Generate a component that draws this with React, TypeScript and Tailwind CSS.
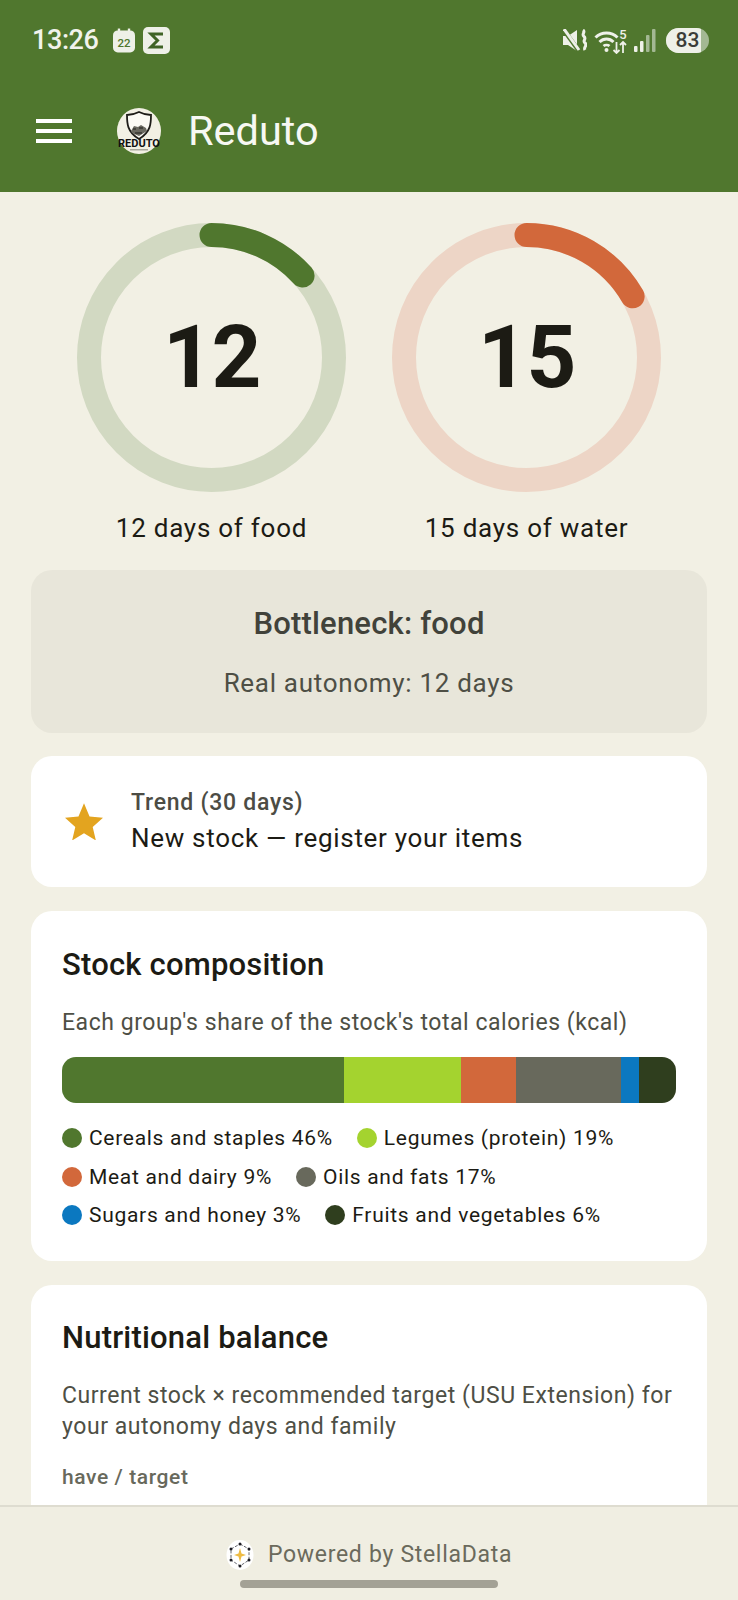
import React from 'react';

const MAX_DAYS = 90;

const segments = [
    { label: 'Cereals and staples', pct: 46, color: 'bg-[#50772e]' },
    { label: 'Legumes (protein)', pct: 19, color: 'bg-[#a4d32f]' },
    { label: 'Meat and dairy', pct: 9, color: 'bg-[#d2683b]' },
    { label: 'Oils and fats', pct: 17, color: 'bg-[#68695c]' },
    { label: 'Sugars and honey', pct: 3, color: 'bg-[#0b78c0]' },
    { label: 'Fruits and vegetables', pct: 6, color: 'bg-[#2f3e1e]' },
];

const StatusBar = () => (
    <div className="flex h-[78px] items-center justify-between pl-[32px] pr-[29px] pt-[2px]">
        <div className="flex items-center">
            <span className="text-[27px] font-medium leading-none tracking-[-0.4px] text-[#f1f3ec]">13:26</span>
            <svg width="22" height="25" viewBox="0 0 23 25" className="ml-[14px]">
                <rect x="0" y="2" width="23" height="23" rx="5" fill="#eef0e8" />
                <rect x="5" y="0" width="2.5" height="5" fill="#eef0e8" />
                <rect x="15.5" y="0" width="2.5" height="5" fill="#eef0e8" />
                <text x="11.5" y="19" textAnchor="middle" fontSize="12" fontWeight="500" fill="#50772e" fontFamily="Roboto">22</text>
            </svg>
            <svg width="27" height="27" viewBox="0 0 27 27" className="ml-[8px]">
                <rect width="27" height="27" rx="5" fill="#eef0e8" />
                <path d="M20 7H8l6.500 6.500L8 20h12" fill="none" stroke="#3f6326" strokeWidth="3" />
            </svg>
        </div>
        <div className="flex items-center">
            <svg width="24" height="23" viewBox="0 0 24 23">
                <path d="M0 7h5l9-6v21l-9-6H0z" fill="#eef0e8" />
                <path d="M0 0l16 22" stroke="#50772e" strokeWidth="4.500" />
                <path d="M1 0l15 21" stroke="#eef0e8" strokeWidth="3" />
                <path d="M20 1c3 2-2 4 1 6.500s-2 4 1 6.500-2 4 0 7" fill="none" stroke="#eef0e8" strokeWidth="3" />
            </svg>
            <svg width="33" height="27" viewBox="0 -2 33 27" className="ml-[7px]">
                <path d="M1.500 8.500c6-6 16-6 22 0" fill="none" stroke="#eef0e8" strokeWidth="3" />
                <path d="M5.500 13c4-4 10-4 14 0" fill="none" stroke="#eef0e8" strokeWidth="3" />
                <path d="M9.500 17c1.500-1.500 4.500-1.500 6 0" fill="none" stroke="#eef0e8" strokeWidth="2.500" />
                <circle cx="12.500" cy="21" r="2" fill="#eef0e8" />
                <text x="29" y="10" textAnchor="middle" fontSize="13" fontWeight="500" fill="#eef0e8" fontFamily="Roboto">5</text>
                <path d="M22.500 13v11M19.500 21l3 3 3-3M29 24V13M26 16l3-3 3 3" fill="none" stroke="#eef0e8" strokeWidth="1.800" />
            </svg>
            <svg width="22" height="23" viewBox="0 0 22 23" className="ml-[7px]">
                <rect x="0" y="17" width="3.500" height="6" rx="1" fill="#eef0e8" />
                <rect x="6" y="12" width="3.500" height="11" rx="1" fill="#eef0e8" />
                <rect x="12" y="6" width="3.500" height="17" rx="1" fill="#a3b893" />
                <rect x="18" y="0" width="3.500" height="23" rx="1" fill="#a3b893" />
            </svg>
            <div className="relative ml-[10px] flex h-[25px] w-[43px] items-center justify-center overflow-hidden rounded-full bg-[#a3b893]">
                <div className="absolute inset-y-0 left-0 w-[35px] bg-[#eef0e8]" />
                <span className="relative text-[21px] font-medium leading-none text-[#3b3d38]">83</span>
            </div>
        </div>
    </div>
);

// App logo: shield badge on a cream disc
const ShieldLogo = () => (
    <svg width="44" height="46" viewBox="0 0 44 46">
        <ellipse cx="22" cy="23" rx="22" ry="23" fill="#f2f0e4" />
        <path d="M22 4c4 2 8 3 12 3 0 8 0 17-12 24C10 24 10 15 10 7c4 0 8-1 12-3z" fill="#fbfaf4" stroke="#1d1c18" strokeWidth="1.800" />
        <path d="M14 23l3-5 4 1 3-2 5 3 1 3-8 5-7-3z" fill="#6a6960" />
        <path d="M16 21h3M22 20h4M18 25h7" stroke="#1d1c18" strokeWidth="1.200" />
        <text x="22" y="39" textAnchor="middle" fontSize="11" fontWeight="700" fill="#111" fontFamily="Roboto">REDUTO</text>
        <rect x="13" y="41" width="18" height="1.500" fill="#a9a89d" />
    </svg>
);

const Ring = ({ days, label, track, bar }: { days: number; label: string; track: string; bar: string }) => {
    const size = 269;
    const stroke = 24;
    const r = (size - stroke) / 2;
    const c = 2 * Math.PI * r;
    const len = (days / MAX_DAYS) * c;

    return (
        <div className="flex w-[269px] flex-col items-center">
            <div className="relative h-[269px] w-[269px]">
                <svg width={size} height={size} className="-rotate-90">
                    <circle cx={size / 2} cy={size / 2} r={r} fill="none" stroke={track} strokeWidth={stroke} />
                    <circle
                        cx={size / 2}
                        cy={size / 2}
                        r={r}
                        fill="none"
                        stroke={bar}
                        strokeWidth={stroke}
                        strokeLinecap="round"
                        strokeDasharray={`${len} ${c}`}
                    />
                </svg>
                <div className="absolute inset-0 flex items-center justify-center text-[87px] font-bold leading-none tracking-[-1.5px] text-[#1c1b14]">
                    {days}
                </div>
            </div>
            <div className="mt-[19px] text-[26px] leading-[34px] tracking-[0.75px] text-[#1c1b14]">{label}</div>
        </div>
    );
};

const StellaMark = () => (
    <svg width="28" height="30" viewBox="0 0 28 30">
        <ellipse cx="14" cy="15" rx="13.500" ry="15" fill="#ffffff" />
        <path d="M14 4l9 5v11l-9 6-9-6V9z" fill="none" stroke="#3c3f4a" strokeWidth="0.800" strokeDasharray="3 1.500" />
        <path d="M14 8l1.500 5.500L20 15l-4.500 1.500L14 22l-1.500-5.500L8 15l4.500-1.500z" fill="#eebb44" />
        {[[14, 4], [23, 9], [23, 20], [14, 26], [5, 20], [5, 9]].map(([x, y]) => (
            <circle key={`${x}-${y}`} cx={x} cy={y} r="1.500" fill="#1d1d24" />
        ))}
    </svg>
);

const App = () => {
    return (
        <div className="flex h-[1600px] w-[738px] flex-col overflow-hidden bg-[#f2f0e4] font-['Roboto',sans-serif]">
            <header className="h-[192px] shrink-0 bg-[#50772e]">
                <StatusBar />
                <div className="flex h-[106px] items-center pl-[36px]">
                    <div className="flex w-[36px] flex-col gap-[6px]">
                        <div className="h-[4px] bg-white" />
                        <div className="h-[4px] bg-white" />
                        <div className="h-[4px] bg-white" />
                    </div>
                    <div className="ml-[45px]">
                        <ShieldLogo />
                    </div>
                    <h1 className="ml-[27px] text-[41.5px] font-normal leading-none text-[#f7f8f3]">Reduto</h1>
                </div>
            </header>

            <main className="min-h-0 flex-1 overflow-hidden px-[31px]">
                <div className="mt-[31px] flex justify-evenly">
                    <Ring days={12} label="12 days of food" track="#d2d9c2" bar="#50772e" />
                    <Ring days={15} label="15 days of water" track="#edd5c6" bar="#d2683b" />
                </div>

                <section className="mt-[25px] flex h-[163px] flex-col items-center rounded-[21px] bg-[#e8e6da] pt-[36px]">
                    <h2 className="text-[31px] font-medium leading-[36px] tracking-[0.2px] text-[#41423a]">Bottleneck: food</h2>
                    <p className="mt-[25px] text-[26px] leading-[32px] tracking-[0.7px] text-[#4e4f45]">Real autonomy: 12 days</p>
                </section>

                <section className="mt-[23px] flex h-[131px] items-center rounded-[21px] bg-white pl-[34px]">
                    <svg width="38" height="37" viewBox="0 0 24 23" fill="#e3a41f">
                        <path d="M12 0l3.500 8.400 8.500.7-6.500 5.800 2 8.600L12 18.900 4.500 23.500l2-8.600L0 9.100l8.500-.7z" />
                    </svg>
                    <div className="ml-[28px]">
                        <div className="text-[23px] font-medium leading-[30px] tracking-[0.75px] text-[#4c4c44]">Trend (30 days)</div>
                        <div className="mt-[3px] text-[26px] leading-[34px] tracking-[0.7px] text-[#1c1b14]">New stock — register your items</div>
                    </div>
                </section>

                <section className="mt-[24px] h-[350px] rounded-[21px] bg-white px-[31px] pt-[35px]">
                    <h2 className="text-[31px] font-medium leading-[38px] tracking-[0.2px] text-[#1c1b14]">Stock composition</h2>
                    <p className="mt-[24px] text-[23px] leading-[30px] tracking-[0.55px] text-[#4e4f45]">
                        Each group's share of the stock's total calories (kcal)
                    </p>
                    <div className="mt-[19px] flex h-[46px] overflow-hidden rounded-[14px]">
                        {segments.map((s) => (
                            <div key={s.label} className={s.color} style={{ width: `${s.pct}%` }} />
                        ))}
                    </div>
                    <div className="mt-[21px] flex flex-wrap gap-x-[24px] gap-y-[10.5px]">
                        {segments.map((s) => (
                            <div key={s.label} className="flex h-[28px] items-center gap-[7px]">
                                <span className={`h-[20px] w-[20px] rounded-full ${s.color}`} />
                                <span className="text-[21px] leading-[28px] tracking-[0.7px] text-[#1c1b14]">
                                    {s.label} {s.pct}%
                                </span>
                            </div>
                        ))}
                    </div>
                </section>

                <section className="mt-[24px] rounded-[21px] bg-white px-[31px] pt-[34px] pb-[40px]">
                    <h2 className="text-[31px] font-medium leading-[38px] tracking-[0.2px] text-[#1c1b14]">Nutritional balance</h2>
                    <p className="mt-[23px] text-[23px] leading-[31px] tracking-[0.55px] text-[#4e4f45]">
                        Current stock × recommended target (USU Extension) for your autonomy days and family
                    </p>
                    <p className="mt-[21px] text-[21px] font-medium leading-[28px] tracking-[0.6px] text-[#68695c]">have / target</p>
                </section>
            </main>

            <footer className="flex h-[95px] shrink-0 flex-col items-center border-t-2 border-[#dedcd0] bg-[#f0eee2]">
                <div className="mt-[33px] flex items-center gap-[14px]">
                    <StellaMark />
                    <span className="text-[23px] leading-[30px] tracking-[0.7px] text-[#6b6a5c]">Powered by StellaData</span>
                </div>
                <div className="mt-[10px] h-[8px] w-[258px] rounded-full bg-[#a3a195]" />
            </footer>
        </div>
    );
};

export default App;
